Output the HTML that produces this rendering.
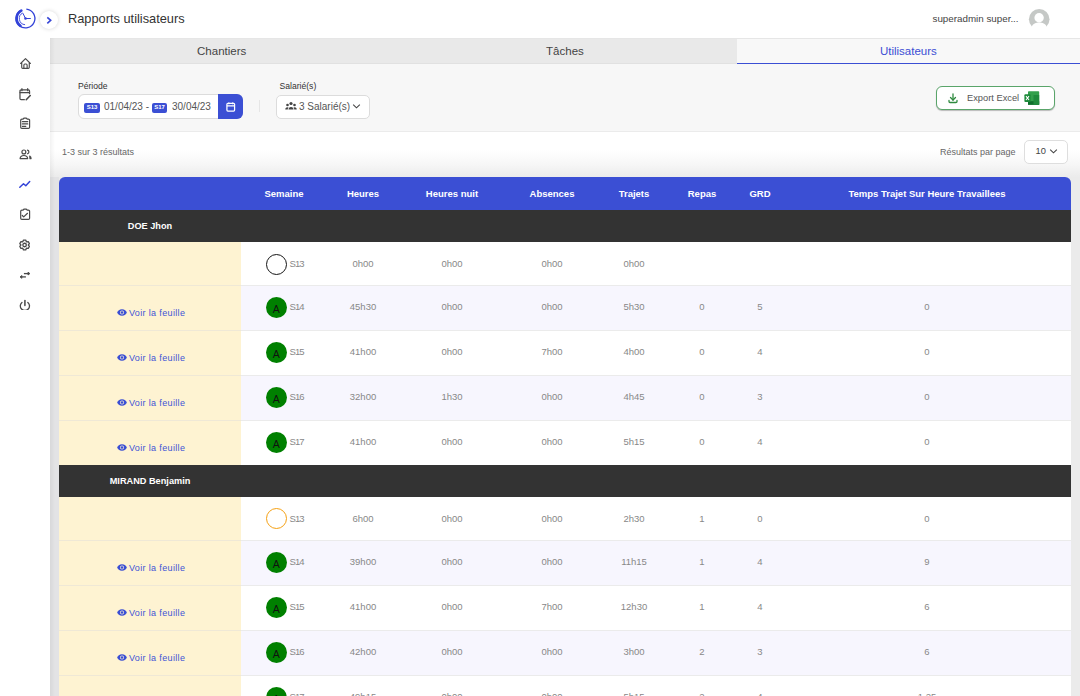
<!DOCTYPE html><html><head><meta charset="utf-8"><style>
*{margin:0;padding:0;box-sizing:border-box}
html,body{width:1080px;height:696px;overflow:hidden;background:#fff;font-family:"Liberation Sans", sans-serif;}
.a{position:absolute}
#side{left:0;top:0;width:50px;height:696px;background:#fff;z-index:5}
#hdr{left:50px;top:0;width:1030px;height:39px;background:#fff;border-bottom:1px solid #e6e6e6}
#title{left:68px;top:11px;font-size:12.8px;color:#333;white-space:nowrap}
#user{left:932.5px;top:12.5px;font-size:9.8px;color:#444;white-space:nowrap}
#tabs{left:50px;top:39px;width:1030px;height:25px;background:#e9e9e9;border-bottom:1px solid #e1e1e1}
.tab{top:0;height:26px;font-size:11.5px;color:#444;text-align:center;line-height:26px}
#filt{left:50px;top:64px;width:1030px;height:68px;background:#f7f7f7;border-bottom:1px solid #ebebeb}
.lbl{font-size:8.6px;color:#333;line-height:10px}
#res{left:50px;top:132px;width:1030px;height:45px;background:linear-gradient(to bottom,#fff 0px,#fff 18px,#f7f7f7 32px,#ececec 44px)}
#tarea{left:50px;top:177px;width:1030px;height:519px;background:#ebebeb}
.th{top:177px;height:33px;line-height:33px;color:#fff;font-weight:bold;font-size:9.5px;text-align:center;white-space:nowrap}
.cell{font-size:9.5px;color:#888;text-align:center;white-space:nowrap}
</style></head><body>
<div id="side" class="a"></div>
<div id="hdr" class="a"></div>
<div id="title" class="a">Rapports utilisateurs</div>
<div id="user" class="a">superadmin super...</div>
<div id="tabs" class="a"></div>
<div class="a tab" style="left:50.0px;top:38px;width:343.3px">Chantiers</div>
<div class="a tab" style="left:393.3px;top:38px;width:343.3px">Tâches</div>
<div class="a" style="left:736.7px;top:39px;width:343.3px;height:25px;background:#f8f8f8;border-bottom:1.5px solid #3b4fd4"></div>
<div class="a tab" style="left:736.7px;top:38px;width:343.3px;color:#3b4fd4">Utilisateurs</div>
<div class="a" style="left:50px;top:38px;width:5px;height:658px;background:linear-gradient(to right,rgba(0,0,0,0.05),rgba(0,0,0,0));z-index:4"></div>
<svg class="a" style="left:13.3px;top:6.1px;z-index:6" width="26" height="26" viewBox="0 0 26 26">
<path d="M13.32 3.14 A9.4 9.4 0 1 1 7.80 4.36" fill="none" stroke="#3343d8" stroke-width="1.3"/>
<path d="M7.40 19.79 A8.9 8.9 0 0 1 8.32 4.64" fill="none" stroke="#3343d8" stroke-width="2.7" stroke-linecap="round"/>
<path d="M12.07 18.68 A6.2 6.2 0 0 1 9.69 6.98" fill="none" stroke="#3343d8" stroke-width="0.9"/>
<path d="M9.9 7.2 L12.5 12.5 L17.8 12.5" fill="none" stroke="#3343d8" stroke-width="1"/>
<circle cx="12.5" cy="12.5" r="1.3" fill="#3343d8"/>
</svg>
<div class="a" style="left:40px;top:11px;width:18px;height:18px;border-radius:50%;background:#fff;box-shadow:0 0 4px rgba(0,0,0,0.16);z-index:6"></div>
<svg class="a" style="left:40px;top:11px;z-index:7" width="18" height="18" viewBox="0 0 18 18"><path d="M7.3 6.3 L10.7 9.3 L7.3 12.3" fill="none" stroke="#3645d6" stroke-width="1.6"/></svg>
<svg class="a" style="left:18.5px;top:56.5px;z-index:6" width="13" height="13" viewBox="0 0 24 24" fill="none" stroke="#4a4a4a" stroke-width="2.1" stroke-linecap="round" stroke-linejoin="round"><path d="M5 12H3l9-9 9 9h-2"/><path d="M5 12v7a2 2 0 0 0 2 2h10a2 2 0 0 0 2-2v-7"/><path d="M9 21v-6a2 2 0 0 1 2-2h2a2 2 0 0 1 2 2v6"/></svg>
<svg class="a" style="left:18.25px;top:87.75px;z-index:6" width="13.5" height="13.5" viewBox="0 0 24 24" fill="none" stroke="#4a4a4a" stroke-width="2.2" stroke-linecap="round" stroke-linejoin="round"><path d="M11.3 20.8H5.5a2 2 0 0 1-2-2V5.2a2 2 0 0 1 2-2h13a2 2 0 0 1 2 2v4.8"/><path d="M7 1.2v3.5"/><path d="M17.2 1.2v3.5"/><path d="M3.5 8.2h17"/><path d="M21.8 13.4L14.6 20.8" stroke-width="2.8"/></svg>
<svg class="a" style="left:18px;top:115px;z-index:6" width="14" height="14" viewBox="0 0 14 14" fill="none" stroke="#4a4a4a" stroke-width="1.2" stroke-linecap="round" stroke-linejoin="round"><path d="M5.2 4.1H3.9a1.2 1.2 0 0 0-1.2 1.2V12.2a1.2 1.2 0 0 0 1.2 1.2h6.5a1.2 1.2 0 0 0 1.2-1.2V5.3a1.2 1.2 0 0 0-1.2-1.2H9.1M5.2 4.1Q5.5 3.1 6.4 3.1H7.9Q8.8 3.1 9.1 4.1"/><path d="M4.4 6.6H9.8M4.4 8.9H9.8M4.4 11.4H7.8" stroke-width="1.1"/></svg>
<svg class="a" style="left:18.5px;top:148.0px;z-index:6" width="13" height="13" viewBox="0 0 24 24" fill="none" stroke="#4a4a4a" stroke-width="2.2" stroke-linecap="round" stroke-linejoin="round"><circle cx="9" cy="7.3" r="3.6"/><path d="M2 19.6Q2.5 13.8 9 13.8Q15.5 13.8 16 19.6Z"/><path d="M15.6 3.9A3.5 3.5 0 0 1 15.6 10.7"/><path d="M19.8 15Q22.3 16.3 22.3 19.6H20.3Z"/></svg>
<svg class="a" style="left:18px;top:176px;z-index:6" width="14" height="14" viewBox="0 0 14 14" fill="none" stroke="#3343d8" stroke-width="1.5" stroke-linecap="round" stroke-linejoin="round"><path d="M1.8 11.2L5.5 7.7L7.8 9.7L11.7 5.5"/></svg>
<svg class="a" style="left:18px;top:206px;z-index:6" width="14" height="14" viewBox="0 0 14 14" fill="none" stroke="#4a4a4a" stroke-width="1.2" stroke-linecap="round" stroke-linejoin="round"><path d="M5.2 4.1H3.9a1.2 1.2 0 0 0-1.2 1.2V12.2a1.2 1.2 0 0 0 1.2 1.2h6.5a1.2 1.2 0 0 0 1.2-1.2V5.3a1.2 1.2 0 0 0-1.2-1.2H9.1M5.2 4.1Q5.5 3.1 6.4 3.1H7.9Q8.8 3.1 9.1 4.1"/><path d="M4.3 9.5L5.7 10.9L9.5 7.3"/></svg>
<svg class="a" style="left:18px;top:238px;z-index:6" width="14" height="14" viewBox="0 0 14 14" fill="none" stroke="#4a4a4a" stroke-width="1.3" stroke-linejoin="round"><path d="M5.48 2.13 L7.72 2.13 L8.45 3.80 L10.26 3.59 L11.38 5.54 L10.30 7.00 L11.38 8.46 L10.26 10.41 L8.45 10.20 L7.72 11.87 L5.48 11.87 L4.75 10.20 L2.94 10.41 L1.82 8.46 L2.90 7.00 L1.82 5.54 L2.94 3.59 L4.75 3.80Z"/><circle cx="6.6" cy="7.0" r="1.75"/></svg>
<svg class="a" style="left:18px;top:268px;z-index:6" width="14" height="14" viewBox="0 0 14 14" fill="#4a4a4a" stroke="#4a4a4a" stroke-width="1.3" stroke-linejoin="round"><path d="M5.9 5.6H10.4" fill="none"/><path d="M10 4.2L11.9 5.6L10 7Z" stroke-width="0.9"/><path d="M3.3 8.9H7.9" fill="none"/><path d="M3.9 7.5L2 8.9L3.9 10.3Z" stroke-width="0.9"/></svg>
<svg class="a" style="left:18px;top:296.4px;z-index:6" width="14" height="14" viewBox="0 0 14 14" fill="none" stroke="#4a4a4a" stroke-width="1.3" stroke-linecap="round"><path d="M3.94 6.38A4.6 4.6 0 1 0 9.86 6.38"/><path d="M6.9 4.5V9.3" stroke-width="1.7" stroke="#5a5a5a"/></svg>
<svg class="a" style="left:1027.5px;top:7.5px" width="23" height="23" viewBox="0 0 23 23">
<circle cx="11.2" cy="11.3" r="10.3" fill="#c5c8c6"/>
<circle cx="11.1" cy="9.8" r="4.7" fill="#fff"/>
<path d="M3.5 19.2 C5 15.6 8 14.6 11.2 14.6 C14.4 14.6 17.4 15.6 18.9 19.2 C17 21.5 14 22.5 11.2 22.5 C8.4 22.5 5.5 21.5 3.5 19.2z" fill="#fff"/>
</svg>
<div id="filt" class="a"></div>
<div id="res" class="a"></div>
<div id="tarea" class="a"></div>
<div class="a" style="left:50px;top:177px;width:9px;height:519px;background:#e3e3e5"></div>
<div class="a lbl" style="left:78px;top:80.5px">Période</div>
<div class="a" style="left:77.5px;top:94px;width:165.5px;height:25px;background:#fff;border:1px solid #dcdcdc;border-radius:6px"></div>
<div class="a" style="left:218.3px;top:94px;width:24.7px;height:25px;background:#3b4fd4;border-radius:0 6px 6px 0"></div>
<svg class="a" style="left:225px;top:100.5px" width="11.5" height="11.5" viewBox="0 0 24 24" fill="none" stroke="#fff" stroke-width="2.6"><rect x="4" y="5" width="16" height="16" rx="2"/><path d="M16 3v4M8 3v4M4 10h16"/></svg>
<div class="a" style="left:84px;top:103px;width:16px;height:9.5px;background:#3b4fd4;border-radius:2px;color:#fff;font-size:6px;font-weight:bold;line-height:9.5px;text-align:center">S13</div>
<div class="a" style="left:104px;top:100px;font-size:10px;color:#555;white-space:nowrap;line-height:14px">01/04/23 -</div>
<div class="a" style="left:152px;top:103px;width:15px;height:9.5px;background:#3b4fd4;border-radius:2px;color:#fff;font-size:6px;font-weight:bold;line-height:9.5px;text-align:center">S17</div>
<div class="a" style="left:172px;top:100px;font-size:10px;color:#555;white-space:nowrap;line-height:14px">30/04/23</div>
<div class="a" style="left:259px;top:100px;width:1px;height:11.5px;background:#e6e6e6"></div>
<div class="a lbl" style="left:279.5px;top:80.5px">Salarié(s)</div>
<div class="a" style="left:276px;top:94.5px;width:93.5px;height:24px;background:#fff;border:1px solid #dcdcdc;border-radius:5px"></div>
<svg class="a" style="left:285px;top:101px" width="12" height="10" viewBox="0 0 24 20" fill="#444"><circle cx="12" cy="5" r="3.2"/><circle cx="5" cy="8" r="2.6"/><circle cx="19" cy="8" r="2.6"/><path d="M7 17a5 5 0 0 1 10 0z"/><path d="M0.5 17a4.5 4.5 0 0 1 6.5-4 6 6 0 0 0-1.5 4z"/><path d="M23.5 17a4.5 4.5 0 0 0-6.5-4 6 6 0 0 1 1.5 4z"/></svg>
<div class="a" style="left:299px;top:99.5px;font-size:10px;color:#555;white-space:nowrap;line-height:14px">3 Salarié(s)</div>
<svg class="a" style="left:351.5px;top:102px" width="9" height="9" viewBox="0 0 10 10" fill="none" stroke="#444" stroke-width="1.2"><path d="M1.3 2.8l3.7 3.7l3.7-3.7"/></svg>
<div class="a" style="left:936px;top:86px;width:119px;height:24px;background:#fff;border:1px solid #5aa56a;border-radius:6px;box-shadow:0 1px 1px rgba(0,0,0,0.25)"></div>
<svg class="a" style="left:947px;top:92px" width="12" height="12" viewBox="0 0 24 24" fill="none" stroke="#2f8a3f" stroke-width="2.6" stroke-linecap="round"><path d="M4 17v2a2 2 0 0 0 2 2h12a2 2 0 0 0 2-2v-2"/><path d="M7 11l5 5l5-5"/><path d="M12 4v12"/></svg>
<div class="a" style="left:967px;top:91px;font-size:9.3px;color:#555;white-space:nowrap;line-height:14px">Export Excel</div>
<svg class="a" style="left:1024px;top:91px" width="16" height="14" viewBox="0 0 16 14">
<rect x="4" y="0.2" width="11.2" height="13.6" rx="0.8" fill="#33a04c"/>
<rect x="4" y="10.2" width="11.2" height="3.6" fill="#0f6e2c"/>
<rect x="9.5" y="4" width="5.7" height="9.8" fill="#1f8a3c"/>
<rect x="0.4" y="3.3" width="6.2" height="7.6" rx="1" fill="#1c8a3a"/>
<path d="M2 5.2 L5 9 M5 5.2 L2 9" stroke="#fff" stroke-width="1.1"/>
</svg>
<div class="a" style="left:62px;top:146px;font-size:9px;color:#666;white-space:nowrap;line-height:12px">1-3 sur 3 résultats</div>
<div class="a" style="left:940px;top:146px;font-size:9px;color:#666;white-space:nowrap;line-height:12px">Résultats par page</div>
<div class="a" style="left:1024px;top:139.5px;width:43.5px;height:24px;background:#fff;border:1px solid #dedede;border-radius:5px"></div>
<div class="a" style="left:1035.5px;top:144.7px;font-size:9.3px;color:#444;white-space:nowrap;line-height:13px">10</div>
<svg class="a" style="left:1049px;top:147px" width="9" height="9" viewBox="0 0 10 10" fill="none" stroke="#444" stroke-width="1.2"><path d="M1.3 2.8l3.7 3.7l3.7-3.7"/></svg>
<div class="a" style="left:59px;top:177px;width:1012px;height:33px;background:#3b4fd4;border-radius:6px 6px 0 0"></div>
<div class="a th" style="left:184px;width:200px">Semaine</div>
<div class="a th" style="left:263px;width:200px">Heures</div>
<div class="a th" style="left:352px;width:200px">Heures nuit</div>
<div class="a th" style="left:452px;width:200px">Absences</div>
<div class="a th" style="left:534px;width:200px">Trajets</div>
<div class="a th" style="left:602px;width:200px">Repas</div>
<div class="a th" style="left:660px;width:200px">GRD</div>
<div class="a th" style="left:827px;width:200px">Temps Trajet Sur Heure Travaillees</div>
<div class="a" style="left:59px;top:210px;width:1012px;height:32px;background:#333"></div>
<div class="a" style="left:50px;top:210px;width:200px;height:32px;line-height:32px;text-align:center;color:#fff;font-weight:bold;font-size:9.2px">DOE Jhon</div>
<div class="a" style="left:59px;top:242px;width:1012px;height:43px;background:#fff;"></div>
<div class="a" style="left:59px;top:242px;width:182px;height:43px;background:#fef3d2;"></div>
<div class="a" style="left:265.5px;top:253.79999999999998px;width:21px;height:21px;border-radius:50%;border:1.8px solid #151515"></div>
<div class="a cell" style="left:289.5px;top:257.7px;line-height:12px;letter-spacing:-0.9px">S13</div>
<div class="a cell" style="left:323px;width:80px;top:257.7px;line-height:12px">0h00</div>
<div class="a cell" style="left:412px;width:80px;top:257.7px;line-height:12px">0h00</div>
<div class="a cell" style="left:512px;width:80px;top:257.7px;line-height:12px">0h00</div>
<div class="a cell" style="left:594px;width:80px;top:257.7px;line-height:12px">0h00</div>
<div class="a" style="left:59px;top:285px;width:1012px;height:45px;background:#f7f6fe;border-top:1px solid #ebebeb;"></div>
<div class="a" style="left:59px;top:285px;width:182px;height:45px;background:#fef3d2;border-top:1px solid #efe8d6;"></div>
<div class="a" style="left:265.5px;top:296.7px;width:21.3px;height:21.3px;border-radius:50%;background:#008000;color:#111;font-size:10.5px;line-height:25px;text-align:center">A</div>
<div class="a cell" style="left:289.5px;top:300.5px;line-height:12px;letter-spacing:-0.9px">S14</div>
<div class="a cell" style="left:323px;width:80px;top:300.5px;line-height:12px">45h30</div>
<div class="a cell" style="left:412px;width:80px;top:300.5px;line-height:12px">0h00</div>
<div class="a cell" style="left:512px;width:80px;top:300.5px;line-height:12px">0h00</div>
<div class="a cell" style="left:594px;width:80px;top:300.5px;line-height:12px">5h30</div>
<div class="a cell" style="left:662px;width:80px;top:300.5px;line-height:12px">0</div>
<div class="a cell" style="left:720px;width:80px;top:300.5px;line-height:12px">5</div>
<div class="a cell" style="left:887px;width:80px;top:300.5px;line-height:12px">0</div>
<svg class="a" style="left:116.5px;top:309.0px" width="10" height="7" viewBox="0 0 20 14"><path d="M10 0.5C5 0.5 1.5 4 0.3 7C1.5 10 5 13.5 10 13.5C15 13.5 18.5 10 19.7 7C18.5 4 15 0.5 10 0.5z" fill="#3b4fd4"/><circle cx="10" cy="7" r="4" fill="#fef3d2"/><circle cx="10" cy="7" r="2.6" fill="#3b4fd4"/></svg>
<div class="a" style="left:129px;top:307.0px;line-height:12px;color:#4254d6;font-size:9px;white-space:nowrap;letter-spacing:0.35px">Voir la feuille</div>
<div class="a" style="left:59px;top:330px;width:1012px;height:45px;background:#fff;border-top:1px solid #ebebeb;"></div>
<div class="a" style="left:59px;top:330px;width:182px;height:45px;background:#fef3d2;border-top:1px solid #efe8d6;"></div>
<div class="a" style="left:265.5px;top:341.7px;width:21.3px;height:21.3px;border-radius:50%;background:#008000;color:#111;font-size:10.5px;line-height:25px;text-align:center">A</div>
<div class="a cell" style="left:289.5px;top:345.5px;line-height:12px;letter-spacing:-0.9px">S15</div>
<div class="a cell" style="left:323px;width:80px;top:345.5px;line-height:12px">41h00</div>
<div class="a cell" style="left:412px;width:80px;top:345.5px;line-height:12px">0h00</div>
<div class="a cell" style="left:512px;width:80px;top:345.5px;line-height:12px">7h00</div>
<div class="a cell" style="left:594px;width:80px;top:345.5px;line-height:12px">4h00</div>
<div class="a cell" style="left:662px;width:80px;top:345.5px;line-height:12px">0</div>
<div class="a cell" style="left:720px;width:80px;top:345.5px;line-height:12px">4</div>
<div class="a cell" style="left:887px;width:80px;top:345.5px;line-height:12px">0</div>
<svg class="a" style="left:116.5px;top:354.0px" width="10" height="7" viewBox="0 0 20 14"><path d="M10 0.5C5 0.5 1.5 4 0.3 7C1.5 10 5 13.5 10 13.5C15 13.5 18.5 10 19.7 7C18.5 4 15 0.5 10 0.5z" fill="#3b4fd4"/><circle cx="10" cy="7" r="4" fill="#fef3d2"/><circle cx="10" cy="7" r="2.6" fill="#3b4fd4"/></svg>
<div class="a" style="left:129px;top:352.0px;line-height:12px;color:#4254d6;font-size:9px;white-space:nowrap;letter-spacing:0.35px">Voir la feuille</div>
<div class="a" style="left:59px;top:375px;width:1012px;height:45px;background:#f7f6fe;border-top:1px solid #ebebeb;"></div>
<div class="a" style="left:59px;top:375px;width:182px;height:45px;background:#fef3d2;border-top:1px solid #efe8d6;"></div>
<div class="a" style="left:265.5px;top:386.7px;width:21.3px;height:21.3px;border-radius:50%;background:#008000;color:#111;font-size:10.5px;line-height:25px;text-align:center">A</div>
<div class="a cell" style="left:289.5px;top:390.5px;line-height:12px;letter-spacing:-0.9px">S16</div>
<div class="a cell" style="left:323px;width:80px;top:390.5px;line-height:12px">32h00</div>
<div class="a cell" style="left:412px;width:80px;top:390.5px;line-height:12px">1h30</div>
<div class="a cell" style="left:512px;width:80px;top:390.5px;line-height:12px">0h00</div>
<div class="a cell" style="left:594px;width:80px;top:390.5px;line-height:12px">4h45</div>
<div class="a cell" style="left:662px;width:80px;top:390.5px;line-height:12px">0</div>
<div class="a cell" style="left:720px;width:80px;top:390.5px;line-height:12px">3</div>
<div class="a cell" style="left:887px;width:80px;top:390.5px;line-height:12px">0</div>
<svg class="a" style="left:116.5px;top:399.0px" width="10" height="7" viewBox="0 0 20 14"><path d="M10 0.5C5 0.5 1.5 4 0.3 7C1.5 10 5 13.5 10 13.5C15 13.5 18.5 10 19.7 7C18.5 4 15 0.5 10 0.5z" fill="#3b4fd4"/><circle cx="10" cy="7" r="4" fill="#fef3d2"/><circle cx="10" cy="7" r="2.6" fill="#3b4fd4"/></svg>
<div class="a" style="left:129px;top:397.0px;line-height:12px;color:#4254d6;font-size:9px;white-space:nowrap;letter-spacing:0.35px">Voir la feuille</div>
<div class="a" style="left:59px;top:420px;width:1012px;height:45px;background:#fff;border-top:1px solid #ebebeb;"></div>
<div class="a" style="left:59px;top:420px;width:182px;height:45px;background:#fef3d2;border-top:1px solid #efe8d6;"></div>
<div class="a" style="left:265.5px;top:431.7px;width:21.3px;height:21.3px;border-radius:50%;background:#008000;color:#111;font-size:10.5px;line-height:25px;text-align:center">A</div>
<div class="a cell" style="left:289.5px;top:435.5px;line-height:12px;letter-spacing:-0.9px">S17</div>
<div class="a cell" style="left:323px;width:80px;top:435.5px;line-height:12px">41h00</div>
<div class="a cell" style="left:412px;width:80px;top:435.5px;line-height:12px">0h00</div>
<div class="a cell" style="left:512px;width:80px;top:435.5px;line-height:12px">0h00</div>
<div class="a cell" style="left:594px;width:80px;top:435.5px;line-height:12px">5h15</div>
<div class="a cell" style="left:662px;width:80px;top:435.5px;line-height:12px">0</div>
<div class="a cell" style="left:720px;width:80px;top:435.5px;line-height:12px">4</div>
<div class="a cell" style="left:887px;width:80px;top:435.5px;line-height:12px">0</div>
<svg class="a" style="left:116.5px;top:444.0px" width="10" height="7" viewBox="0 0 20 14"><path d="M10 0.5C5 0.5 1.5 4 0.3 7C1.5 10 5 13.5 10 13.5C15 13.5 18.5 10 19.7 7C18.5 4 15 0.5 10 0.5z" fill="#3b4fd4"/><circle cx="10" cy="7" r="4" fill="#fef3d2"/><circle cx="10" cy="7" r="2.6" fill="#3b4fd4"/></svg>
<div class="a" style="left:129px;top:442.0px;line-height:12px;color:#4254d6;font-size:9px;white-space:nowrap;letter-spacing:0.35px">Voir la feuille</div>
<div class="a" style="left:59px;top:465px;width:1012px;height:32px;background:#333"></div>
<div class="a" style="left:50px;top:465px;width:200px;height:32px;line-height:32px;text-align:center;color:#fff;font-weight:bold;font-size:9.2px">MIRAND Benjamin</div>
<div class="a" style="left:59px;top:497px;width:1012px;height:43px;background:#fff;"></div>
<div class="a" style="left:59px;top:497px;width:182px;height:43px;background:#fef3d2;"></div>
<div class="a" style="left:265.5px;top:508.20000000000005px;width:21px;height:21px;border-radius:50%;border:1.5px solid #f5a012"></div>
<div class="a cell" style="left:289.5px;top:512.7px;line-height:12px;letter-spacing:-0.9px">S13</div>
<div class="a cell" style="left:323px;width:80px;top:512.7px;line-height:12px">6h00</div>
<div class="a cell" style="left:412px;width:80px;top:512.7px;line-height:12px">0h00</div>
<div class="a cell" style="left:512px;width:80px;top:512.7px;line-height:12px">0h00</div>
<div class="a cell" style="left:594px;width:80px;top:512.7px;line-height:12px">2h30</div>
<div class="a cell" style="left:662px;width:80px;top:512.7px;line-height:12px">1</div>
<div class="a cell" style="left:720px;width:80px;top:512.7px;line-height:12px">0</div>
<div class="a cell" style="left:887px;width:80px;top:512.7px;line-height:12px">0</div>
<div class="a" style="left:59px;top:540px;width:1012px;height:45px;background:#f7f6fe;border-top:1px solid #ebebeb;"></div>
<div class="a" style="left:59px;top:540px;width:182px;height:45px;background:#fef3d2;border-top:1px solid #efe8d6;"></div>
<div class="a" style="left:265.5px;top:551.7px;width:21.3px;height:21.3px;border-radius:50%;background:#008000;color:#111;font-size:10.5px;line-height:25px;text-align:center">A</div>
<div class="a cell" style="left:289.5px;top:555.5px;line-height:12px;letter-spacing:-0.9px">S14</div>
<div class="a cell" style="left:323px;width:80px;top:555.5px;line-height:12px">39h00</div>
<div class="a cell" style="left:412px;width:80px;top:555.5px;line-height:12px">0h00</div>
<div class="a cell" style="left:512px;width:80px;top:555.5px;line-height:12px">0h00</div>
<div class="a cell" style="left:594px;width:80px;top:555.5px;line-height:12px">11h15</div>
<div class="a cell" style="left:662px;width:80px;top:555.5px;line-height:12px">1</div>
<div class="a cell" style="left:720px;width:80px;top:555.5px;line-height:12px">4</div>
<div class="a cell" style="left:887px;width:80px;top:555.5px;line-height:12px">9</div>
<svg class="a" style="left:116.5px;top:564.0px" width="10" height="7" viewBox="0 0 20 14"><path d="M10 0.5C5 0.5 1.5 4 0.3 7C1.5 10 5 13.5 10 13.5C15 13.5 18.5 10 19.7 7C18.5 4 15 0.5 10 0.5z" fill="#3b4fd4"/><circle cx="10" cy="7" r="4" fill="#fef3d2"/><circle cx="10" cy="7" r="2.6" fill="#3b4fd4"/></svg>
<div class="a" style="left:129px;top:562.0px;line-height:12px;color:#4254d6;font-size:9px;white-space:nowrap;letter-spacing:0.35px">Voir la feuille</div>
<div class="a" style="left:59px;top:585px;width:1012px;height:45px;background:#fff;border-top:1px solid #ebebeb;"></div>
<div class="a" style="left:59px;top:585px;width:182px;height:45px;background:#fef3d2;border-top:1px solid #efe8d6;"></div>
<div class="a" style="left:265.5px;top:596.7px;width:21.3px;height:21.3px;border-radius:50%;background:#008000;color:#111;font-size:10.5px;line-height:25px;text-align:center">A</div>
<div class="a cell" style="left:289.5px;top:600.5px;line-height:12px;letter-spacing:-0.9px">S15</div>
<div class="a cell" style="left:323px;width:80px;top:600.5px;line-height:12px">41h00</div>
<div class="a cell" style="left:412px;width:80px;top:600.5px;line-height:12px">0h00</div>
<div class="a cell" style="left:512px;width:80px;top:600.5px;line-height:12px">7h00</div>
<div class="a cell" style="left:594px;width:80px;top:600.5px;line-height:12px">12h30</div>
<div class="a cell" style="left:662px;width:80px;top:600.5px;line-height:12px">1</div>
<div class="a cell" style="left:720px;width:80px;top:600.5px;line-height:12px">4</div>
<div class="a cell" style="left:887px;width:80px;top:600.5px;line-height:12px">6</div>
<svg class="a" style="left:116.5px;top:609.0px" width="10" height="7" viewBox="0 0 20 14"><path d="M10 0.5C5 0.5 1.5 4 0.3 7C1.5 10 5 13.5 10 13.5C15 13.5 18.5 10 19.7 7C18.5 4 15 0.5 10 0.5z" fill="#3b4fd4"/><circle cx="10" cy="7" r="4" fill="#fef3d2"/><circle cx="10" cy="7" r="2.6" fill="#3b4fd4"/></svg>
<div class="a" style="left:129px;top:607.0px;line-height:12px;color:#4254d6;font-size:9px;white-space:nowrap;letter-spacing:0.35px">Voir la feuille</div>
<div class="a" style="left:59px;top:630px;width:1012px;height:45px;background:#f7f6fe;border-top:1px solid #ebebeb;"></div>
<div class="a" style="left:59px;top:630px;width:182px;height:45px;background:#fef3d2;border-top:1px solid #efe8d6;"></div>
<div class="a" style="left:265.5px;top:641.7px;width:21.3px;height:21.3px;border-radius:50%;background:#008000;color:#111;font-size:10.5px;line-height:25px;text-align:center">A</div>
<div class="a cell" style="left:289.5px;top:645.5px;line-height:12px;letter-spacing:-0.9px">S16</div>
<div class="a cell" style="left:323px;width:80px;top:645.5px;line-height:12px">42h00</div>
<div class="a cell" style="left:412px;width:80px;top:645.5px;line-height:12px">0h00</div>
<div class="a cell" style="left:512px;width:80px;top:645.5px;line-height:12px">0h00</div>
<div class="a cell" style="left:594px;width:80px;top:645.5px;line-height:12px">3h00</div>
<div class="a cell" style="left:662px;width:80px;top:645.5px;line-height:12px">2</div>
<div class="a cell" style="left:720px;width:80px;top:645.5px;line-height:12px">3</div>
<div class="a cell" style="left:887px;width:80px;top:645.5px;line-height:12px">6</div>
<svg class="a" style="left:116.5px;top:654.0px" width="10" height="7" viewBox="0 0 20 14"><path d="M10 0.5C5 0.5 1.5 4 0.3 7C1.5 10 5 13.5 10 13.5C15 13.5 18.5 10 19.7 7C18.5 4 15 0.5 10 0.5z" fill="#3b4fd4"/><circle cx="10" cy="7" r="4" fill="#fef3d2"/><circle cx="10" cy="7" r="2.6" fill="#3b4fd4"/></svg>
<div class="a" style="left:129px;top:652.0px;line-height:12px;color:#4254d6;font-size:9px;white-space:nowrap;letter-spacing:0.35px">Voir la feuille</div>
<div class="a" style="left:59px;top:675px;width:1012px;height:45px;background:#fff;border-top:1px solid #ebebeb;"></div>
<div class="a" style="left:59px;top:675px;width:182px;height:45px;background:#fef3d2;border-top:1px solid #efe8d6;"></div>
<div class="a" style="left:265.5px;top:686.7px;width:21.3px;height:21.3px;border-radius:50%;background:#008000;color:#111;font-size:10.5px;line-height:25px;text-align:center">A</div>
<div class="a cell" style="left:289.5px;top:690.5px;line-height:12px;letter-spacing:-0.9px">S17</div>
<div class="a cell" style="left:323px;width:80px;top:690.5px;line-height:12px">49h15</div>
<div class="a cell" style="left:412px;width:80px;top:690.5px;line-height:12px">0h00</div>
<div class="a cell" style="left:512px;width:80px;top:690.5px;line-height:12px">0h00</div>
<div class="a cell" style="left:594px;width:80px;top:690.5px;line-height:12px">5h15</div>
<div class="a cell" style="left:662px;width:80px;top:690.5px;line-height:12px">2</div>
<div class="a cell" style="left:720px;width:80px;top:690.5px;line-height:12px">4</div>
<div class="a cell" style="left:887px;width:80px;top:690.5px;line-height:12px">1.25</div>
<svg class="a" style="left:116.5px;top:699.0px" width="10" height="7" viewBox="0 0 20 14"><path d="M10 0.5C5 0.5 1.5 4 0.3 7C1.5 10 5 13.5 10 13.5C15 13.5 18.5 10 19.7 7C18.5 4 15 0.5 10 0.5z" fill="#3b4fd4"/><circle cx="10" cy="7" r="4" fill="#fef3d2"/><circle cx="10" cy="7" r="2.6" fill="#3b4fd4"/></svg>
<div class="a" style="left:129px;top:697.0px;line-height:12px;color:#4254d6;font-size:9px;white-space:nowrap;letter-spacing:0.35px">Voir la feuille</div>
</body></html>
